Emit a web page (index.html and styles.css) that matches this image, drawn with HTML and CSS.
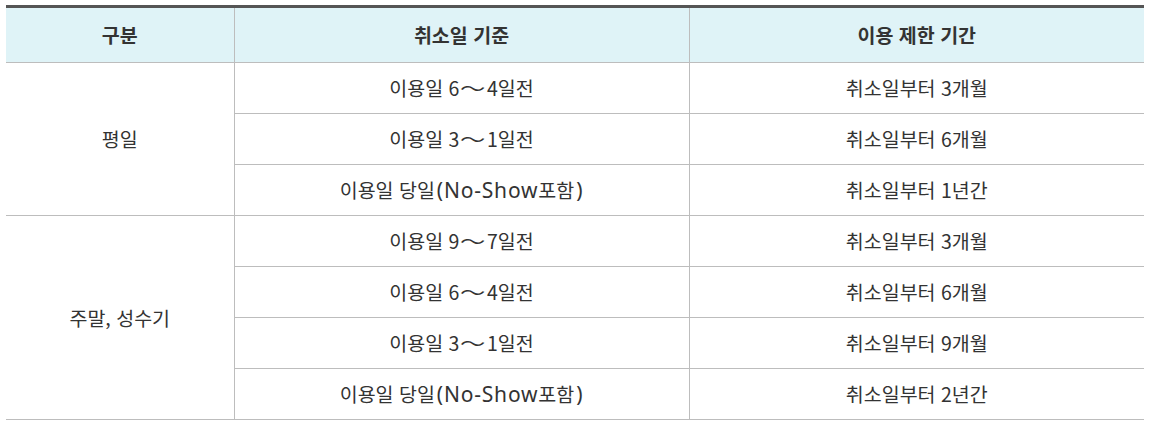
FILE: index.html
```html
<!DOCTYPE html>
<html lang="ko">
<head>
<meta charset="utf-8">
<link rel="stylesheet" href="styles.css">
</head>
<body>
<div class="wrap">
<table class="tbl">
  <colgroup>
    <col class="c1"><col class="c2"><col class="c3">
  </colgroup>
  <thead>
    <tr><th>구분</th><th>취소일 기준</th><th>이용 제한 기간</th></tr>
  </thead>
  <tbody>
    <tr><td rowspan="3">평일</td><td>이용일 6<span class="tl">～</span>4일전</td><td>취소일부터 3개월</td></tr>
    <tr><td>이용일 3<span class="tl">～</span>1일전</td><td>취소일부터 6개월</td></tr>
    <tr><td>이용일 당일<span class="en">(No-Show</span>포함<span class="en">)</span></td><td>취소일부터 1년간</td></tr>
    <tr><td rowspan="4">주말, 성수기</td><td>이용일 9<span class="tl">～</span>7일전</td><td>취소일부터 3개월</td></tr>
    <tr><td>이용일 6<span class="tl">～</span>4일전</td><td>취소일부터 6개월</td></tr>
    <tr><td>이용일 3<span class="tl">～</span>1일전</td><td>취소일부터 9개월</td></tr>
    <tr><td>이용일 당일<span class="en">(No-Show</span>포함<span class="en">)</span></td><td>취소일부터 2년간</td></tr>
  </tbody>
</table>
</div>
</body>
</html>
```
FILE: styles.css
```css
html, body { margin: 0; padding: 0; background: #fff; }
.wrap { padding: 5px 6px 0 6px; }
.tbl {
  width: 1138px;
  border-collapse: collapse;
  table-layout: fixed;
  border-top: 3px solid #555;
  font-family: "Noto Sans CJK KR", "Noto Sans", sans-serif;
  font-size: 19.5px;
  color: #333;
}
.c1 { width: 228px; }
.c2 { width: 455px; }
.c3 { width: 455px; }
.tbl th, .tbl td {
  border: 1px solid #bdbdbd;
  text-align: center;
  padding: 0;
  line-height: 24px;
}
.tbl th:first-child, .tbl td:first-child { border-left: 0; }
.tbl th:last-child, .tbl td:last-child { border-right: 0; }
.tbl td[rowspan] { border-right: 1px solid #bdbdbd; }
.tbl th {
  background: #dff3f7;
  font-weight: 700;
  height: 54px;
  border-top: 0;
}
.tbl td { height: 50px; font-weight: 400; }
.tl {
  display: inline-block;
  margin: 0 4px;
  transform: scaleX(1.3);
}
.en {
  font-family: "Noto Sans", sans-serif;
  font-size: 21px;
  letter-spacing: 0.8px;
  margin-left: 2px;
}
```
